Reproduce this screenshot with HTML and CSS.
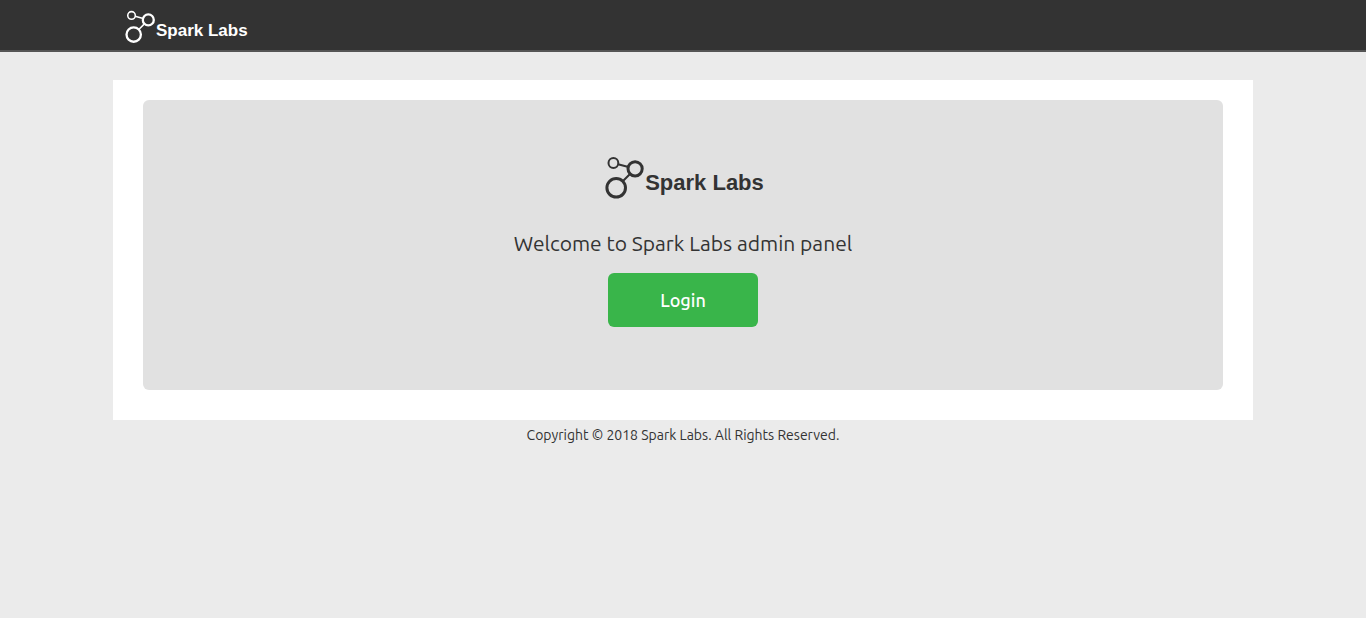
FILE: index.html
```html
<!DOCTYPE html>
<html lang="en">
<head>
  <meta charset="utf-8">
  <meta name="viewport" content="width=device-width, initial-scale=1">
  <title>Spark Labs</title>
  <link rel="stylesheet" href="styles.css">
</head>
<body>
  <header class="topbar">
    <div class="topbar-inner">
      <a class="brand" href="#">
        <svg class="brand-mark" viewBox="0 0 40 44" aria-hidden="true">
          <path d="M13 8.2 23.5 11M25 18 17.5 25.5"/>
          <circle class="thin" cx="8.4" cy="7" r="4.9"/>
          <circle cx="30.1" cy="12.8" r="7.1"/>
          <circle cx="11.2" cy="31.8" r="9.3"/>
        </svg>
        <span class="brand-name">Spark Labs</span>
      </a>
    </div>
  </header>
  <main class="container">
    <section class="jumbotron">
      <div class="brand brand-large">
        <svg class="brand-mark" viewBox="0 0 40 44" aria-hidden="true">
          <path d="M13 8.2 23.5 11M25 18 17.5 25.5"/>
          <circle class="thin" cx="8.4" cy="7" r="4.9"/>
          <circle cx="30.1" cy="12.8" r="7.1"/>
          <circle cx="11.2" cy="31.8" r="9.3"/>
        </svg>
        <span class="brand-name">Spark Labs</span>
      </div>
      <p class="welcome">Welcome to Spark Labs admin panel</p>
      <button class="login" type="button">Login</button>
    </section>
  </main>
  <footer class="footer">Copyright © 2018 Spark Labs. All Rights Reserved.</footer>
</body>
</html>
```
FILE: styles.css
```css
* {
  box-sizing: border-box;
}

body {
  margin: 0;
  background: #ebebeb;
  color: #333;
  font-family: Ubuntu, "Noto Sans", sans-serif;
  font-size: 14px;
  line-height: 20px;
}

.topbar {
  background: #333;
  border-bottom: 2px solid #555;
  margin-bottom: 28px;
}

.topbar-inner {
  max-width: 1140px;
  margin: 0 auto;
  padding: 10px 12px 6px;
}

.brand {
  display: flex;
  width: max-content;
  color: #fff;
  font-family: "Liberation Sans", Arial, sans-serif;
  font-size: 17px;
  font-weight: bold;
  text-decoration: none;
}

.brand-mark {
  width: 31px;
  height: 34px;
  fill: none;
  stroke: currentColor;
  stroke-width: 3;
}

.brand-mark .thin {
  stroke-width: 2;
}

.brand-mark path {
  stroke-width: 2;
}

.brand-name {
  padding-top: 11px;
}

.brand-large {
  margin: 0 auto;
  padding-left: 3px;
  color: #333;
  font-size: 22px;
}

.brand-large .brand-mark {
  width: 40px;
  height: 44px;
}

.brand-large .brand-name {
  padding-top: 17px;
}

.container {
  max-width: 1140px;
  margin: 0 auto;
  padding: 20px 30px 30px;
  background: #fff;
}

.jumbotron {
  padding: 56px 60px 63px;
  border-radius: 6px;
  background: #e1e1e1;
  text-align: center;
}

.welcome {
  margin: 28px 0 14px;
  font-size: 21px;
  line-height: 31px;
}

.login {
  display: block;
  width: 150px;
  height: 54px;
  margin: 0 auto;
  padding: 0;
  border: 0;
  border-radius: 6px;
  background: #39b54a;
  color: #fff;
  font-family: inherit;
  font-size: 18px;
  font-weight: 500;
  cursor: pointer;
}

.footer {
  padding: 5px 0;
  text-align: center;
}
```
